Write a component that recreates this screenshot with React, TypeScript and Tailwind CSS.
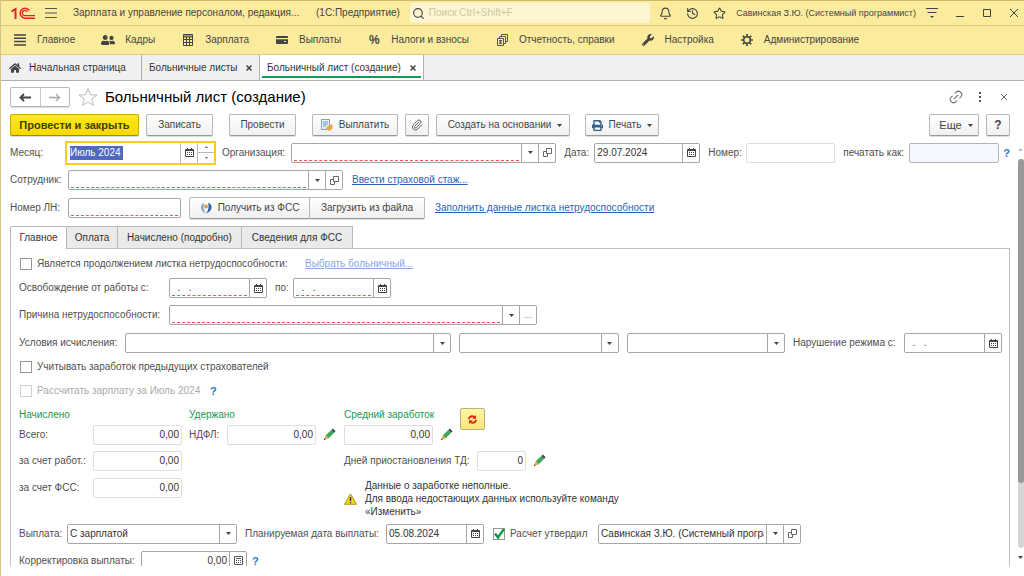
import React from "react";
import { Bell, History, Star, Link2, Paperclip, Search } from "lucide-react";
import { FaUserFriends, FaHome, FaPrint, FaWrench } from "react-icons/fa";

const Caret = () => (
  <svg className="w-[5px] h-[3px] shrink-0" viewBox="0 0 5 3" fill="#444">
    <path d="M0 0h5L2.5 3z" />
  </svg>
);

const CalendarIcon = () => (
  <svg className="w-[9px] h-[9px]" viewBox="0 0 9 9" fill="none" stroke="#444">
    <path d="M.5 1.5h8v7h-8zM0 2.5h9M2.5 0v2M6.5 0v2" />
    <path d="M2 4.5h5M2 6.5h5" strokeDasharray="1 1" />
  </svg>
);

const OpenIcon = () => (
  <svg className="w-[9px] h-[9px]" viewBox="0 0 9 9" fill="none" stroke="#666">
    <path d="M3.5.5h5v5h-5zM3 3.5H.5v5h4V6" />
  </svg>
);

const CalcIcon = () => (
  <svg className="w-[9px] h-[9px]" viewBox="0 0 9 9" fill="none" stroke="#555">
    <path d="M.5.5h8v8h-8zM2 2.5h5" />
    <path d="M2 4.5h5M2 6.5h5" strokeDasharray="1 1" />
  </svg>
);

const PencilIcon = () => (
  <svg className="w-[13px] h-[13px]" viewBox="0 0 13 13">
    <path d="M2.800 7.300 8.300 2l2.900 2.800L5.700 10.200z" fill="#3fa45b" />
    <path d="M8.300 2 9.800.6 12.600 3.300 11.200 4.800z" fill="#3b4a5a" />
    <path d="M2.800 7.300 5.700 10.200 1 12z" fill="#e2a73c" />
    <path d="M1.700 10.300 2.700 11.300.6 12.300z" fill="#333" />
  </svg>
);

const icons = {
  caret: <Caret />,
  calendar: <CalendarIcon />,
  open: <OpenIcon />,
  calc: <CalcIcon />,
};

const iconTitles = {
  caret: "Выбрать из списка",
  calendar: "Календарь",
  open: "Открыть",
  calc: "Калькулятор",
};

type FieldProps = {
  id: string;
  width: string;
  value?: string;
  label?: string;
  required?: boolean;
  readOnly?: boolean;
  right?: boolean;
  look?: string;
  buttons?: (keyof typeof icons)[];
};

// Поле ввода с кнопками справа
const Field = ({ id, width, value = "", label, required, readOnly, right, look = "border-[#a6a6a6] bg-white", buttons = [] }: FieldProps) => (
  <div className={`flex h-5 items-stretch rounded-xs border ${look} ${width}`}>
    <input
      id={id}
      aria-label={label}
      defaultValue={value}
      readOnly={readOnly}
      className={`mx-[2px] mb-px min-w-0 flex-1 border-b border-dashed bg-transparent pt-[2px] text-[#333] outline-none ${
        required ? "border-[#ff5050]" : "border-transparent"
      } ${right ? "text-right" : ""}`}
    />
    {buttons.map((name) => (
      <button key={name} title={iconTitles[name]} className="flex w-[17px] shrink-0 items-center justify-center border-l border-[#a6a6a6]">
        {icons[name]}
      </button>
    ))}
  </div>
);

type SelectProps = {
  id: string;
  width: string;
  options: string[];
  label?: string;
  required?: boolean;
  children?: React.ReactNode;
};

const Select = ({ id, width, options, label, required, children }: SelectProps) => (
  <div className={`flex h-5 items-stretch rounded-xs border border-[#a6a6a6] bg-white ${width}`}>
    <select
      id={id}
      aria-label={label}
      className={`mx-[2px] mb-px min-w-0 flex-1 appearance-none border-b border-dashed bg-transparent pt-[2px] text-[#333] outline-none ${
        required ? "border-[#ff5050]" : "border-transparent"
      }`}
    >
      {options.map((o) => (
        <option key={o}>{o}</option>
      ))}
    </select>
    <span className="flex w-[17px] shrink-0 items-center justify-center border-l border-[#a6a6a6]">
      <Caret />
    </span>
    {children}
  </div>
);

const Label = ({ htmlFor, width = "", children }: { htmlFor: string; width?: string; children: React.ReactNode }) => (
  <label htmlFor={htmlFor} className={`shrink-0 whitespace-nowrap text-[#505050] ${width}`}>
    {children}
  </label>
);

const buttonBase =
  "flex h-[22px] items-center justify-center whitespace-nowrap rounded-xs border border-[#b8b8b8] border-b-[#999] bg-linear-to-b from-white to-[#f0f0f0] text-[#444] shadow-[0_1px_0_#ddd]";

const checkboxBase = "peer col-start-1 row-start-1 h-3 w-3 appearance-none border bg-white";

const Checkbox = ({ id, checked, disabled }: { id: string; checked?: boolean; disabled?: boolean }) => (
  <span className="grid shrink-0">
    <input
      id={id}
      type="checkbox"
      defaultChecked={checked}
      disabled={disabled}
      className={`${checkboxBase} ${disabled ? "border-[#d0d0d0]" : "border-[#999]"}`}
    />
    <svg className="pointer-events-none invisible col-start-1 row-start-1 h-3 w-3 overflow-visible peer-checked:visible" viewBox="0 0 12 12" fill="none" stroke="#0a9b4b" strokeWidth="2.400">
      <path d="M2 5.500 5 9.500 11 1" />
    </svg>
  </span>
);

const Help = () => (
  <button title="Справка" className="shrink-0 text-[11px] font-bold text-[#1e80c8]">
    ?
  </button>
);

const EditButton = () => (
  <button title="Изменить" className="ml-[7px] shrink-0">
    <PencilIcon />
  </button>
);

const menu = [
  {
    name: "Главное",
    icon: (
      <svg className="h-3 w-3" viewBox="0 0 12 12" stroke="#444" strokeWidth="1.500">
        <path d="M0 1h12M0 4.300h12M0 7.600h12M0 11h12" />
      </svg>
    ),
  },
  { name: "Кадры", icon: <FaUserFriends className="h-[14px] w-[14px] shrink-0" /> },
  {
    name: "Зарплата",
    icon: (
      <svg className="h-3 w-3" viewBox="0 0 12 12" fill="none" stroke="#444">
        <path d="M1.500.5h9v11h-9zM1 3h10M1 2h10M1 5.500h10M1 8.500h10M4.500 3v8M7.500 3v8" />
      </svg>
    ),
  },
  {
    name: "Выплаты",
    icon: (
      <svg className="h-3 w-3" viewBox="0 0 12 12" fill="#444">
        <path d="M1 2h10a1 1 0 0 1 1 1v1H0V3a1 1 0 0 1 1-1zM0 5.300h12V9a1 1 0 0 1-1 1H1a1 1 0 0 1-1-1z" />
        <path d="M8 7.500h2" stroke="#fbec9d" />
      </svg>
    ),
  },
  { name: "Налоги и взносы", icon: <span className="text-[12px] leading-3 font-bold">%</span> },
  {
    name: "Отчетность, справки",
    icon: (
      <svg className="h-3 w-3" viewBox="0 0 12 12" fill="none" stroke="#555">
        <path d="M1.500 4.500h6v7h-6zM3.500 4V2.500h6v7H8M5.500 2V.5h6v7H10M3 6.500h3L3.500 8 6 9.500H3" />
      </svg>
    ),
  },
  { name: "Настройка", icon: <FaWrench className="h-3 w-3" /> },
  {
    name: "Администрирование",
    icon: (
      <svg className="h-3 w-3" viewBox="0 0 12 12" fill="none" stroke="#444">
        <circle cx="6" cy="6" r="3.300" strokeWidth="1.600" />
        <path d="M6 0v2.500M6 9.500V12M0 6h2.500M9.500 6H12M1.800 1.800l1.700 1.700M8.500 8.500l1.700 1.700M1.800 10.200l1.700-1.700M8.500 3.500l1.700-1.700" strokeWidth="1.700" />
      </svg>
    ),
  },
];

function TitleBar() {
  return (
    <header className="flex h-[26px] shrink-0 items-center border-y border-[#d9ca80] border-t-[#cdbb6a] pr-[5px] pl-[10px]">
      <svg className="h-[13px] w-6 shrink-0" viewBox="0 0 24 13" fill="none" stroke="#d8262c">
        <path d="M.5 4.500 4.500 2V12" strokeWidth="2" />
        <path d="M18.300 3.500A5 5 0 1 0 14 11.200H24" strokeWidth="1.500" />
        <path d="M16.200 4.800A2.600 2.600 0 1 0 14 8.700H24" strokeWidth="1.300" />
      </svg>
      <button title="Главное меню" className="ml-[10px]">
        <svg className="h-3 w-3" viewBox="0 0 12 12" stroke="#555">
          <path d="M0 1.500h12M0 6h12M0 10.500h12" />
        </svg>
      </button>
      <h1 className="ml-4 w-[233px] shrink-0 whitespace-nowrap">Зарплата и управление персоналом, редакция...</h1>
      <span className="ml-[10px] shrink-0 whitespace-nowrap">(1С:Предприятие)</span>
      <label className="ml-[10px] flex h-5 min-w-0 flex-1 items-center gap-1 rounded-xs bg-[#fef6d0] px-[2px]">
        <Search className="h-[13px] w-[13px] shrink-0" strokeWidth={2} />
        <input
          type="search"
          aria-label="Поиск"
          placeholder="Поиск Ctrl+Shift+F"
          className="min-w-0 flex-1 bg-transparent outline-none placeholder:text-[#cfc7a8]"
        />
      </label>
      <div className="ml-[9px] flex shrink-0 items-center gap-[14px]">
        <button title="Оповещения"><Bell className="h-[13px] w-[13px]" /></button>
        <button title="История"><History className="h-[13px] w-[13px]" /></button>
        <button title="Избранное"><Star className="h-[13px] w-[13px]" /></button>
      </div>
      <a href="#user" className="ml-[10px] shrink-0 whitespace-nowrap text-[9px]">Савинская З.Ю. (Системный программист)</a>
      <div className="ml-[10px] flex shrink-0 items-center gap-[17px]">
        <button title="Сервис">
          <svg className="h-3 w-3" viewBox="0 0 12 12" fill="#444" stroke="#444">
            <path d="M0 1.500h12M1.500 5.500h9" />
            <path d="M4 9h4L6 11z" stroke="none" />
          </svg>
        </button>
        <button title="Свернуть">
          <svg className="h-[10px] w-[10px]" viewBox="0 0 10 10" stroke="#444"><path d="M1 8.500h8" /></svg>
        </button>
        <button title="Развернуть">
          <svg className="h-[10px] w-[10px]" viewBox="0 0 10 10" fill="none" stroke="#444"><path d="M1.500 1.500h7v7h-7z" /></svg>
        </button>
        <button title="Закрыть">
          <svg className="h-[10px] w-[10px]" viewBox="0 0 10 10" stroke="#444"><path d="M1 1l8 8M9 1 1 9" /></svg>
        </button>
      </div>
    </header>
  );
}

function Tabs() {
  return (
    <nav className="flex h-[26px] shrink-0 items-stretch border-b border-[#b0b0b0] bg-[#f0f0f0] text-[#333]">
      <a href="#home" className="flex w-[141px] items-center gap-2 border-r border-[#b0b0b0] pl-2 whitespace-nowrap">
        <FaHome className="h-3 w-3 text-[#444]" />
        Начальная страница
      </a>
      <div className="flex w-[118px] items-center justify-between border-r border-[#b0b0b0] px-[7px] whitespace-nowrap">
        <a href="#list">Больничные листы</a>
        <CloseTab />
      </div>
      <div className="flex w-[164px] flex-col border-r border-[#b0b0b0] bg-white px-[2px] whitespace-nowrap">
        <div className="flex flex-1 items-center justify-between px-[5px] pt-1">
          <a href="#new">Больничный лист (создание)</a>
          <CloseTab />
        </div>
        <div className="mb-[2px] h-[2px] bg-[#159a55]" />
      </div>
    </nav>
  );
}

const CloseTab = () => (
  <button title="Закрыть">
    <svg className="h-[6px] w-[6px]" viewBox="0 0 6 6" stroke="#444" strokeWidth="1.500"><path d="M.5.5l5 5M5.500.5l-5 5" /></svg>
  </button>
);

function FormHeader() {
  return (
    <>
      <div className="flex h-8 shrink-0 items-center pr-3 pl-[9px]">
        <div className="flex h-5 w-[60px] items-stretch rounded-xs border border-[#b8b8b8] shadow-[0_1px_0_#ddd]">
          <button title="Назад" className="flex flex-1 items-center justify-center">
            <svg className="h-[9px] w-3" viewBox="0 0 12 9" fill="none" stroke="#444" strokeWidth="1.800"><path d="M12 4.500H2M5 1 1.500 4.500 5 8" /></svg>
          </button>
          <button title="Вперед" className="flex flex-1 items-center justify-center border-l border-[#c8c8c8]">
            <svg className="h-[9px] w-3" viewBox="0 0 12 9" fill="none" stroke="#aaa" strokeWidth="1.400"><path d="M0 4.500h10M7 1l3.500 3.500L7 8" /></svg>
          </button>
        </div>
        <button title="Избранное" className="ml-2">
          <svg className="h-5 w-5" viewBox="0 0 20 20" fill="none" stroke="#b5bcc4"><path d="M10 1.500 12.300 7.700l6.700.3-5.300 4.100 1.900 6.400L10 14.800l-5.600 3.700 1.900-6.400L1 8l6.700-.3z" /></svg>
        </button>
        <h2 className="ml-[7px] flex-1 text-[15px] leading-5 text-black">Больничный лист (создание)</h2>
        <div className="flex items-center gap-2">
          <button title="Ссылка" className="flex w-4 justify-center"><Link2 className="h-4 w-4 -rotate-45 text-[#666]" strokeWidth={1.500} /></button>
          <button title="Еще" className="flex w-4 justify-center">
            <svg className="h-[10px] w-[2px]" viewBox="0 0 2 10" fill="#555"><path d="M0 0h2v2H0zM0 4h2v2H0zM0 8h2v2H0z" /></svg>
          </button>
          <button title="Закрыть" className="flex w-4 justify-center">
            <svg className="h-[6px] w-[6px]" viewBox="0 0 6 6" stroke="#666"><path d="M0 0l6 6M6 0 0 6" /></svg>
          </button>
        </div>
      </div>
      <div className="mb-[2px] flex h-6 shrink-0 items-center pr-[14px] pl-[9px]">
        <button className="flex h-[22px] w-[129px] items-center justify-center rounded-xs border border-[#c9ab00] border-b-[#a08a00] bg-linear-to-b from-[#ffe81a] to-[#f7d900] text-[11px] font-bold whitespace-nowrap text-[#3f3f00] shadow-[0_1px_0_#ddd]">
          Провести и закрыть
        </button>
        <button className={`${buttonBase} ml-[7px] w-[67px]`}>Записать</button>
        <button className={`${buttonBase} ml-4 w-[67px]`}>Провести</button>
        <button className={`${buttonBase} ml-4 w-[86px] gap-[6px]`}>
          <svg className="h-3 w-3" viewBox="0 0 12 12">
            <path d="M.5.5h8v10h-8z" fill="#e8f0f8" stroke="#7fa3c7" />
            <path d="M2 3h5M2 5h5M2 7h3" stroke="#6b94bf" />
            <path d="M6 7.500 11.500 5v4.500L8.500 12 5 10z" fill="#e9a93a" />
          </svg>
          Выплатить
        </button>
        <button title="Присоединенные файлы" className={`${buttonBase} ml-[7px] w-6`}>
          <Paperclip className="h-3 w-3 text-[#555]" strokeWidth={1.800} />
        </button>
        <button className={`${buttonBase} ml-[7px] w-[134px] gap-[6px] pl-1`}>
          Создать на основании <Caret />
        </button>
        <button className={`${buttonBase} ml-[15px] w-[74px] gap-[6px]`}>
          <FaPrint className="h-[11px] w-[11px] text-[#365f86]" />
          Печать
          <Caret />
        </button>
        <span className="flex-1" />
        <button className={`${buttonBase} w-[50px] gap-[6px] pl-1 text-[11px]`}>
          Еще <Caret />
        </button>
        <button title="Справка" className={`${buttonBase} ml-[7px] w-6 text-[12px] font-bold`}>?</button>
      </div>
    </>
  );
}

function DocumentFields() {
  return (
    <>
      <div className="flex h-[27px] items-center">
        <Label htmlFor="month" width="w-[55px]">Месяц:</Label>
        <div className="flex h-6 w-[151px] shrink-0 items-stretch border-2 border-[#fccb1e] bg-white">
          <div className="flex flex-1 items-center pl-[3px]">
            <input
              id="month"
              defaultValue="Июль 2024"
              className="h-[14px] w-[53px] bg-[#4f68c0] text-white outline-none"
            />
          </div>
          <button title="Календарь" className="flex w-[17px] items-center justify-center border-l border-[#bbb]"><CalendarIcon /></button>
          <div className="flex w-[17px] flex-col items-stretch border-l border-[#bbb]">
            <button title="Больше" className="flex flex-1 items-center justify-center border-b border-[#bbb]">
              <svg className="h-[2px] w-[3px]" viewBox="0 0 3 2" fill="#666"><path d="M0 2h3L1.500 0z" /></svg>
            </button>
            <button title="Меньше" className="flex flex-1 items-center justify-center">
              <svg className="h-[2px] w-[3px]" viewBox="0 0 3 2" fill="#666"><path d="M0 0h3L1.500 2z" /></svg>
            </button>
          </div>
        </div>
        <Label htmlFor="org" width="ml-[6px] w-[69px]">Организация:</Label>
        <Field id="org" width="min-w-0 flex-1" required buttons={["caret", "open"]} />
        <Label htmlFor="date" width="ml-2 w-[30px]">Дата:</Label>
        <Field id="date" width="w-[106px] shrink-0" value="29.07.2024" buttons={["calendar"]} />
        <Label htmlFor="number" width="ml-2 w-[38px]">Номер:</Label>
        <Field id="number" width="w-[89px] shrink-0" look="border-[#dedede] bg-white" />
        <Label htmlFor="print-as" width="ml-2 w-[66px]">печатать как:</Label>
        <Field id="print-as" width="mr-1 w-[90px] shrink-0" look="border-[#b4b4b4] bg-[#f5f7ff]" />
        <Help />
      </div>
      <div className="flex h-7 items-center">
        <Label htmlFor="employee" width="w-[58px]">Сотрудник:</Label>
        <Field id="employee" width="w-[275px]" required buttons={["caret", "open"]} />
        <a href="#experience" className="ml-[9px] text-[#2b62b8] underline">Ввести страховой стаж...</a>
      </div>
      <div className="flex h-[27px] items-center">
        <Label htmlFor="sheet-number" width="w-[58px]">Номер ЛН:</Label>
        <Field id="sheet-number" width="w-[113px]" required />
        <button className={`${buttonBase} ml-2 w-[121px] gap-[6px] rounded-r-none`}>
          <svg className="h-3 w-3" viewBox="0 0 12 12">
            <path d="M4 1C0 2 0 9 5.500 11.500 3 8 3 4 4 1z" fill="#6d9fce" />
            <path d="M8 1c5 1 5 8-2 10.500C9 8 9 4 8 1z" fill="#2d5f9c" />
            <circle cx="6" cy="4.500" r="2" fill="#e0a040" />
          </svg>
          Получить из ФСС
        </button>
        <button className={`${buttonBase} w-[115px] rounded-l-none border-l-0`}>Загрузить из файла</button>
        <a href="#fill" className="ml-[10px] text-[#2b62b8] underline">Заполнить данные листка нетрудоспособности</a>
      </div>
    </>
  );
}

const readOnlyLook = "border-[#dedede] bg-white";

function Totals() {
  return (
    <div className="flex items-start">
      <div className="w-[170px]">
        <h3 className="flex h-[18px] items-end text-[#159a55]">Начислено</h3>
        <div className="flex h-[25px] items-center">
          <Label htmlFor="total" width="w-[74px]">Всего:</Label>
          <Field id="total" width="w-[89px]" value="0,00" right readOnly look={readOnlyLook} />
        </div>
        <div className="flex h-[27px] items-center">
          <Label htmlFor="employer" width="w-[74px]">за счет работ.:</Label>
          <Field id="employer" width="w-[89px]" value="0,00" right readOnly look={readOnlyLook} />
        </div>
        <div className="flex h-[27px] items-center">
          <Label htmlFor="fund" width="w-[74px]">за счет ФСС:</Label>
          <Field id="fund" width="w-[89px]" value="0,00" right readOnly look={readOnlyLook} />
        </div>
      </div>
      <div className="w-[155px]">
        <h3 className="flex h-[18px] items-end text-[#159a55]">Удержано</h3>
        <div className="flex h-[25px] items-center">
          <Label htmlFor="tax" width="w-[38px]">НДФЛ:</Label>
          <Field id="tax" width="w-[89px]" value="0,00" right readOnly look={readOnlyLook} />
          <EditButton />
        </div>
      </div>
      <div>
        <div className="flex items-start">
          <div className="w-[116px]">
            <h3 className="flex h-[18px] items-end">
              <label htmlFor="average" className="text-[#159a55]">Средний заработок</label>
            </h3>
            <div className="flex h-[25px] items-center">
              <Field id="average" width="w-[89px]" value="0,00" right readOnly look={readOnlyLook} />
              <EditButton />
            </div>
          </div>
          <button title="Пересчитать" className="mt-1 flex h-[22px] w-[25px] items-center justify-center rounded-xs border border-[#b9b07a] bg-linear-to-b from-[#fff6a8] to-[#f8e77a]">
            <svg className="h-[9px] w-[9px]" viewBox="0 0 9 9" fill="#e02a10">
              <path d="M0 4.300C0 1 4-.8 6.800 1.200L8 0v3.800H4.300L5.500 2.600C4 1.800 2 2.600 1.800 4.300z" />
              <path d="M9 4.700C9 8 5 9.800 2.200 7.800L1 9V5.200h3.700L3.500 6.400C5 7.200 7 6.400 7.200 4.700z" />
            </svg>
          </button>
        </div>
        <div className="flex h-[27px] items-center">
          <Label htmlFor="days" width="w-[133px]">Дней приостановления ТД:</Label>
          <Field id="days" width="w-[49px]" value="0" right readOnly look={readOnlyLook} />
          <EditButton />
        </div>
        <div className="flex items-center gap-2 pt-[5px] text-[#333]">
          <svg className="h-3 w-[13px] shrink-0" viewBox="0 0 13 12">
            <path d="M6.500.8 12.500 11.300H.5z" fill="#f4d21f" stroke="#b59a1c" strokeLinejoin="round" />
            <path d="M6.500 4v4M6.500 9v1.300" stroke="#333" strokeWidth="1.400" />
          </svg>
          <p className="leading-[13px]">
            Данные о заработке неполные.
            <br />
            Для ввода недостающих данных используйте команду
            <br />
            «Изменить»
          </p>
        </div>
      </div>
    </div>
  );
}

const pages = [
  { name: "Оплата", width: "w-[51px]" },
  { name: "Начислено (подробно)", width: "w-[124px]" },
  { name: "Сведения для ФСС", width: "w-[111px]" },
];

function MainPanel() {
  return (
    <>
      <div role="tablist" className="mt-[5px] flex h-[22px] items-stretch text-[#333]">
        <button role="tab" aria-selected="true" className="-mb-px w-[57px] rounded-t-xs border border-b-0 border-[#b8b8b8] bg-white">
          Главное
        </button>
        {pages.map((page) => (
          <button key={page.name} role="tab" aria-selected="false" className={`border-t border-r border-[#b8b8b8] bg-[#eaeaea] whitespace-nowrap ${page.width}`}>
            {page.name}
          </button>
        ))}
      </div>
      <div role="tabpanel" className="border border-[#c0c0c0] pt-[3px] pr-[7px] pl-2">
        <div className="flex h-6 items-center pl-px">
          <Checkbox id="continuation" />
          <Label htmlFor="continuation" width="ml-[5px] w-[268px]">Является продолжением листка нетрудоспособности:</Label>
          <a href="#choose" className="text-[#84a8dc] underline">Выбрать больничный...</a>
        </div>
        <div className="flex h-6 items-center">
          <Label htmlFor="from" width="w-[150px]">Освобождение от работы с:</Label>
          <Field id="from" width="w-[98px]" value="  .   ." required buttons={["calendar"]} />
          <Label htmlFor="to" width="ml-2 w-[18px]">по:</Label>
          <Field id="to" width="w-[98px]" value="  .   ." required buttons={["calendar"]} />
        </div>
        <div className="flex h-[30px] items-center">
          <Label htmlFor="reason" width="w-[150px]">Причина нетрудоспособности:</Label>
          <Select id="reason" width="w-[368px]" options={[""]} required>
            <button title="Показать все" className="w-[17px] shrink-0 border-l border-[#a6a6a6] text-[#888]">...</button>
          </Select>
        </div>
        <div className="flex h-[26px] items-center">
          <Label htmlFor="terms" width="w-[106px]">Условия исчисления:</Label>
          <Select id="terms" width="min-w-0 flex-[328]" options={[""]} />
          <Select id="terms-2" label="Условия исчисления 2" width="ml-2 min-w-0 flex-[159]" options={[""]} />
          <Select id="terms-3" label="Условия исчисления 3" width="ml-2 min-w-0 flex-[158]" options={[""]} />
          <Label htmlFor="violation" width="ml-2 w-[111px]">Нарушение режима с:</Label>
          <Field id="violation" width="w-[98px] shrink-0" value="  .   ." buttons={["calendar"]} />
        </div>
        <div className="flex h-[22px] items-center pl-px">
          <Checkbox id="previous" />
          <Label htmlFor="previous" width="ml-[5px]">Учитывать заработок предыдущих страхователей</Label>
        </div>
        <div className="flex h-[26px] items-center pl-px">
          <Checkbox id="calculate" disabled />
          <label htmlFor="calculate" className="ml-[5px] w-[173px] text-[#aaa]">Рассчитать зарплату за Июль 2024</label>
          <Help />
        </div>
        <Totals />
        <div className="mt-[2px] flex h-[27px] items-center">
          <Label htmlFor="payment" width="w-[48px]">Выплата:</Label>
          <Select id="payment" width="w-[170px]" options={["С зарплатой", "В межрасчетный период", "С авансом"]} />
          <Label htmlFor="planned" width="ml-2 w-[141px]">Планируемая дата выплаты:</Label>
          <Field id="planned" width="w-[98px]" value="05.08.2024" buttons={["calendar"]} />
          <span className="w-[9px]" />
          <Checkbox id="approved" checked />
          <Label htmlFor="approved" width="ml-[5px] w-[88px]">Расчет утвердил</Label>
          <Field id="approver" label="Расчет утвердил" width="w-[203px]" value="Савинская З.Ю. (Системный программист)" buttons={["caret", "open"]} />
        </div>
        <div className="flex h-[27px] items-center">
          <Label htmlFor="correction" width="w-[122px]">Корректировка выплаты:</Label>
          <Field id="correction" width="mr-[5px] w-[106px]" value="0,00" right buttons={["calc"]} />
          <Help />
        </div>
      </div>
    </>
  );
}

export default function App() {
  return (
    <div className="flex h-screen flex-col overflow-hidden border-l border-[#d3c584] bg-white font-['Liberation_Sans',Arial,sans-serif] text-[10px] leading-[14px] text-[#444]">
      <div className="shrink-0 bg-[#fbec9d]">
        <TitleBar />
        <nav className="flex h-[29px] items-center gap-[27px] border-b border-[#d9ca80] pl-[13px]">
          {menu.map((item) => (
            <a key={item.name} href="#menu" className="flex items-center gap-[11px] whitespace-nowrap">
              <span className="flex w-3 shrink-0 items-center justify-center">{item.icon}</span>
              {item.name}
            </a>
          ))}
        </nav>
      </div>
      <Tabs />
      <FormHeader />
      <div className="mb-[10px] flex min-h-0 flex-1">
        <main className="min-w-0 flex-1 overflow-y-auto pl-[9px] [scrollbar-width:none]">
          <DocumentFields />
          <MainPanel />
        </main>
        {/* Полоса прокрутки */}
        <div className="ml-[7px] flex w-[7px] shrink-0 flex-col items-center">
          <span className="flex h-5 items-center">
            <svg className="h-[3px] w-[5px]" viewBox="0 0 5 3" fill="#bbb"><path d="M0 3h5L2.500 0z" /></svg>
          </span>
          <div className="w-[6px] flex-1 rounded-full bg-[#d6d6d6]">
            <div className="h-5/6 rounded-full bg-[#999]" />
          </div>
          <span className="flex h-[18px] items-center"><Caret /></span>
        </div>
      </div>
    </div>
  );
}
